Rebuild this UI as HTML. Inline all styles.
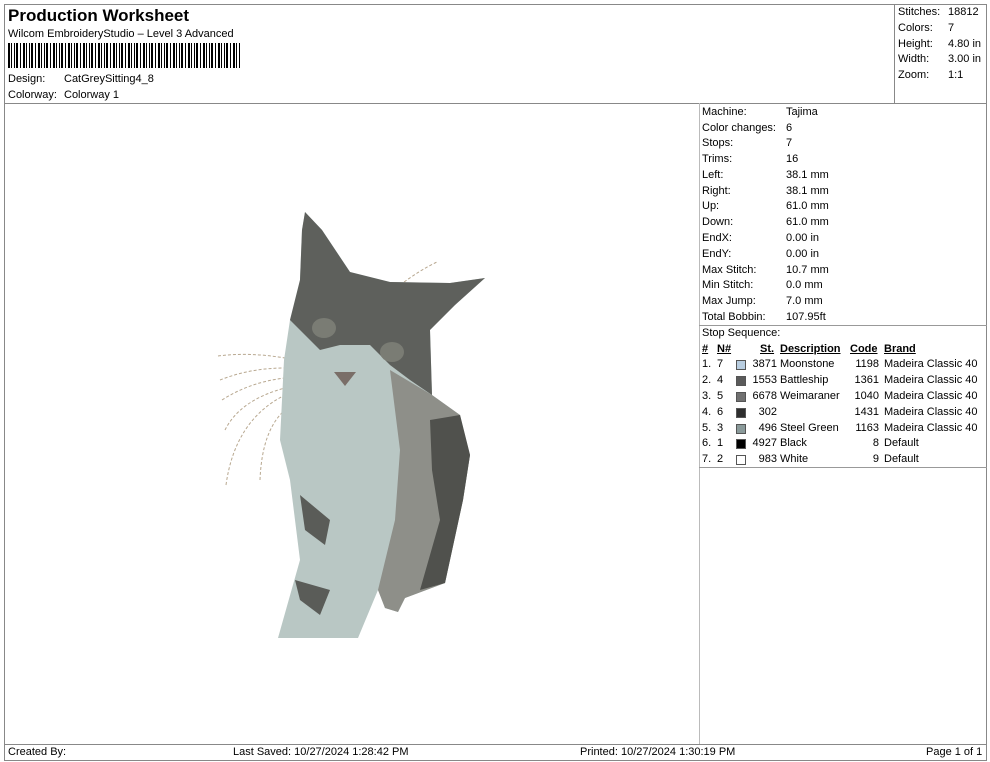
<!DOCTYPE html>
<html><head><meta charset="utf-8"><style>
*{margin:0;padding:0;box-sizing:border-box}
body{width:990px;height:762px;background:#fff;font-family:"Liberation Sans",Arial,sans-serif;color:#000;position:relative;overflow:hidden;font-size:11px}
.a{position:absolute;white-space:nowrap}
.l{position:absolute;background:#888}
.row{position:absolute;left:702px;font-size:11px;white-space:nowrap;width:200px}
.row span{position:absolute;left:84px;white-space:nowrap}
.ss{position:absolute;left:702px;font-size:11px;width:285px;height:16px;white-space:nowrap}
.ss b{font-weight:bold;text-decoration:underline;position:absolute}
.ss i{font-style:normal;position:absolute}
.sw{position:absolute;left:34px;top:2px;width:10px;height:10px;border:1px solid #555}
</style></head><body>
<div class="l" style="left:4px;top:4px;width:983px;height:1px"></div>
<div class="l" style="left:4px;top:4px;width:1px;height:757px"></div>
<div class="l" style="left:986px;top:4px;width:1px;height:757px"></div>
<div class="l" style="left:4px;top:103px;width:983px;height:1px"></div>
<div class="l" style="left:894px;top:4px;width:1px;height:100px"></div>
<div class="l" style="left:699px;top:103px;width:1px;height:641px;background:#bbb"></div>
<div class="l" style="left:699px;top:325px;width:288px;height:1px;background:#999"></div>
<div class="l" style="left:699px;top:467px;width:288px;height:1px;background:#999"></div>
<div class="l" style="left:4px;top:744px;width:983px;height:1px"></div>
<div class="l" style="left:4px;top:760px;width:983px;height:1px"></div>

<div class="a" style="left:8px;top:6px;font-size:17px;font-weight:bold">Production Worksheet</div>
<div class="a" style="left:8px;top:28px;font-size:11px">Wilcom EmbroideryStudio – Level 3 Advanced</div>
<div class="a" style="left:8px;top:43px;width:233px;height:25px;background:repeating-linear-gradient(90deg,#000 0 2px,#fff 2px 3px,#000 3px 4px,#fff 4px 6px,#000 6px 7px,#fff 7px 8px,#000 8px 10px,#fff 10px 12px,#000 12px 13px,#fff 13px 15px)"></div>
<div class="a" style="left:8px;top:73px">Design:</div><div class="a" style="left:64px;top:73px">CatGreySitting4_8</div>
<div class="a" style="left:8px;top:89px">Colorway:</div><div class="a" style="left:64px;top:89px">Colorway 1</div>

<div class="a" style="left:898px;top:6px">Stitches:</div><div class="a" style="left:948px;top:6px">18812</div>
<div class="a" style="left:898px;top:22px">Colors:</div><div class="a" style="left:948px;top:22px">7</div>
<div class="a" style="left:898px;top:38px">Height:</div><div class="a" style="left:948px;top:38px">4.80 in</div>
<div class="a" style="left:898px;top:53px">Width:</div><div class="a" style="left:948px;top:53px">3.00 in</div>
<div class="a" style="left:898px;top:69px">Zoom:</div><div class="a" style="left:948px;top:69px">1:1</div>

<div class="row" style="top:106px">Machine:<span>Tajima</span></div>
<div class="row" style="top:122px">Color changes:<span>6</span></div>
<div class="row" style="top:137px">Stops:<span>7</span></div>
<div class="row" style="top:153px">Trims:<span>16</span></div>
<div class="row" style="top:169px">Left:<span>38.1 mm</span></div>
<div class="row" style="top:185px">Right:<span>38.1 mm</span></div>
<div class="row" style="top:200px">Up:<span>61.0 mm</span></div>
<div class="row" style="top:216px">Down:<span>61.0 mm</span></div>
<div class="row" style="top:232px">EndX:<span>0.00 in</span></div>
<div class="row" style="top:248px">EndY:<span>0.00 in</span></div>
<div class="row" style="top:264px">Max Stitch:<span>10.7 mm</span></div>
<div class="row" style="top:279px">Min Stitch:<span>0.0 mm</span></div>
<div class="row" style="top:295px">Max Jump:<span>7.0 mm</span></div>
<div class="row" style="top:311px">Total Bobbin:<span>107.95ft</span></div>

<div class="row" style="top:327px">Stop Sequence:</div>
<div class="ss" style="top:343px"><b style="left:0">#</b><b style="left:15px">N#</b><b style="left:58px">St.</b><b style="left:78px">Description</b><b style="left:148px">Code</b><b style="left:182px">Brand</b></div>
<div class="ss" style="top:358px"><i style="left:0">1.</i><i style="left:15px">7</i><div class="sw" style="background:#b8cde0"></div><i style="right:210px">3871</i><i style="left:78px">Moonstone</i><i style="right:108px">1198</i><i style="left:182px">Madeira Classic 40</i></div>
<div class="ss" style="top:374px"><i style="left:0">2.</i><i style="left:15px">4</i><div class="sw" style="background:#5a5a5a"></div><i style="right:210px">1553</i><i style="left:78px">Battleship</i><i style="right:108px">1361</i><i style="left:182px">Madeira Classic 40</i></div>
<div class="ss" style="top:390px"><i style="left:0">3.</i><i style="left:15px">5</i><div class="sw" style="background:#707070"></div><i style="right:210px">6678</i><i style="left:78px">Weimaraner</i><i style="right:108px">1040</i><i style="left:182px">Madeira Classic 40</i></div>
<div class="ss" style="top:406px"><i style="left:0">4.</i><i style="left:15px">6</i><div class="sw" style="background:#2e2e2e"></div><i style="right:210px">302</i><i style="right:108px">1431</i><i style="left:182px">Madeira Classic 40</i></div>
<div class="ss" style="top:422px"><i style="left:0">5.</i><i style="left:15px">3</i><div class="sw" style="background:#8a9a9a"></div><i style="right:210px">496</i><i style="left:78px">Steel Green</i><i style="right:108px">1163</i><i style="left:182px">Madeira Classic 40</i></div>
<div class="ss" style="top:437px"><i style="left:0">6.</i><i style="left:15px">1</i><div class="sw" style="background:#000"></div><i style="right:210px">4927</i><i style="left:78px">Black</i><i style="right:108px">8</i><i style="left:182px">Default</i></div>
<div class="ss" style="top:453px"><i style="left:0">7.</i><i style="left:15px">2</i><div class="sw" style="background:#fff"></div><i style="right:210px">983</i><i style="left:78px">White</i><i style="right:108px">9</i><i style="left:182px">Default</i></div>

<svg class="a" style="left:0;top:0" width="700" height="744">
<g fill="none" stroke="#b8a890" stroke-width="1" stroke-dasharray="3 2">
<path d="M218 356 Q250 352 285 358"/><path d="M220 380 Q250 368 285 368"/><path d="M222 400 Q250 382 285 378"/>
<path d="M225 430 Q240 400 285 388"/><path d="M226 485 Q235 420 285 395"/><path d="M260 480 Q262 430 285 410"/>
<path d="M400 285 Q420 270 437 262"/>
</g>
<path d="M278 638 L300 560 L290 480 L280 440 L284 360 L290 320 L300 280 L302 230 L305 212 L322 230 L350 272 L390 282 L450 283 L485 278 L455 305 L430 330 L432 395 L460 415 L470 455 L463 500 L445 583 L405 598 L398 612 L385 608 L378 590 L358 638 Z" fill="#b9c7c4"/>
<path d="M302 230 L305 212 L322 230 L350 272 L390 282 L450 283 L485 278 L455 305 L430 330 L432 395 L410 380 L390 365 L370 345 L340 345 L320 350 L300 330 L290 320 L300 280 Z" fill="#5e605c"/>
<path d="M390 370 L432 395 L460 415 L470 455 L463 500 L445 583 L405 598 L398 612 L385 608 L378 590 L395 520 L400 450 Z" fill="#8e8f89"/>
<path d="M430 420 L460 415 L470 455 L463 500 L445 583 L420 590 L440 520 L432 470 Z" fill="#50514d"/>
<path d="M300 495 L330 520 L325 545 L305 530 Z M295 580 L330 590 L320 615 L300 600 Z" fill="#5a5c58"/>
<ellipse cx="324" cy="328" rx="12" ry="10" fill="#7a7c74"/><ellipse cx="392" cy="352" rx="12" ry="10" fill="#7a7c74"/>
<path d="M334 372 L356 372 L345 386 Z" fill="#7a6e68"/>
</svg>

<div class="a" style="left:8px;top:746px">Created By:</div>
<div class="a" style="left:233px;top:746px">Last Saved: 10/27/2024 1:28:42 PM</div>
<div class="a" style="left:580px;top:746px">Printed: 10/27/2024 1:30:19 PM</div>
<div class="a" style="left:926px;top:746px">Page 1 of 1</div>
</body></html>
